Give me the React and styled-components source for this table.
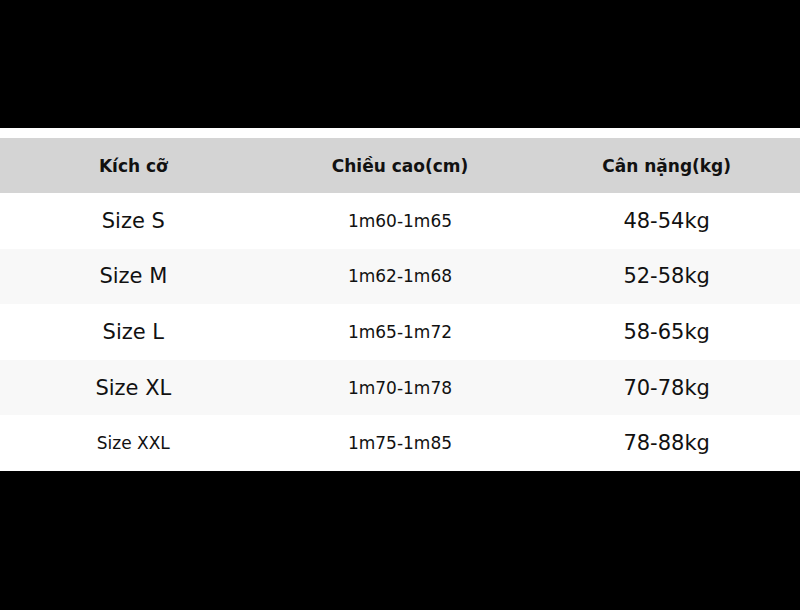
import React from "react";
import styled, { createGlobalStyle } from "styled-components";

const GlobalStyle = createGlobalStyle`
  html, body {
    margin: 0;
    padding: 0;
    background: #000;
  }
  body {
    font-family: "DejaVu Sans", "Liberation Sans", sans-serif;
  }
`;

//size chart data, one entry per row
const rows = [
  { size: "Size S", height: "1m60-1m65", weight: "48-54kg" },
  { size: "Size M", height: "1m62-1m68", weight: "52-58kg" },
  { size: "Size L", height: "1m65-1m72", weight: "58-65kg" },
  { size: "Size XL", height: "1m70-1m78", weight: "70-78kg" },
  { size: "Size XXL", height: "1m75-1m85", weight: "78-88kg", small: true },
];

const App = () => {
  return (
    <Page>
      <GlobalStyle />
      <Panel>
        <HeaderRow>
          <HeadCell>Kích cỡ</HeadCell>
          <HeadCell>Chiều cao(cm)</HeadCell>
          <HeadCell>Cân nặng(kg)</HeadCell>
        </HeaderRow>
        {rows.map((row, i) => (
          <Row key={row.size} $striped={i % 2 === 1}>
            <Cell $size={row.small ? 17 : 21}>{row.size}</Cell>
            <Cell $size={17}>{row.height}</Cell>
            <Cell $size={21}>{row.weight}</Cell>
          </Row>
        ))}
      </Panel>
    </Page>
  );
};

export default App;

const Page = styled.div`
  width: 800px;
  height: 610px;
  background: #000;
  padding-top: 128px;
  box-sizing: border-box;
`;

const Panel = styled.div`
  background: #fff;
  padding-top: 10px;
  display: flex;
  flex-direction: column;
`;

const HeaderRow = styled.div`
  display: grid;
  grid-template-columns: repeat(3, 1fr);
  height: 55px;
  background: #d4d4d4;
  align-items: center;
`;

const HeadCell = styled.div`
  text-align: center;
  font-size: 17px;
  font-weight: bold;
  color: #111;
`;

const Row = styled.div`
  display: grid;
  grid-template-columns: repeat(3, 1fr);
  height: 55.6px;
  align-items: center;
  background: ${({ $striped }) => ($striped ? "#f8f8f8" : "#fff")};
`;

const Cell = styled.div`
  text-align: center;
  font-size: ${({ $size }) => `${$size}px`};
  color: #111;
`;
